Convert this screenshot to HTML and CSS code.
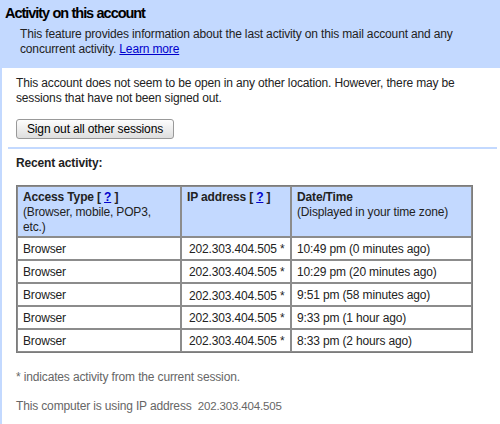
FILE: index.html
```html
<!DOCTYPE html>
<html>
<head>
<meta charset="utf-8">
<link rel="stylesheet" href="styles.css">
</head>
<body>
<div class="page">
  <div class="header">
    <h1 class="title">Activity on this account</h1>
    <p class="intro">This feature provides information about the last activity on this mail account and any concurrent activity. <a href="#" class="link">Learn more</a></p>
  </div>
  <div class="content">
    <p class="status">This account does not seem to be open in any other location. However, there may be sessions that have not been signed out.</p>
    <button class="signout">Sign out all other sessions</button>
    <div class="divider"></div>
    <div class="inner">
      <h2 class="recent">Recent activity:</h2>
      <table class="activity">
        <colgroup><col class="c1"><col class="c2"><col class="c3"></colgroup>
        <thead>
          <tr>
            <th><b>Access Type [ <a href="#" class="link">?</a> ]</b><br><span class="sub">(Browser, mobile, POP3, etc.)</span></th>
            <th><b>IP address [ <a href="#" class="link">?</a> ]</b></th>
            <th><b>Date/Time</b><br><span class="sub">(Displayed in your time zone)</span></th>
          </tr>
        </thead>
        <tbody>
          <tr><td>Browser</td><td class="ip">202.303.404.505 *</td><td>10:49 pm (0 minutes ago)</td></tr>
          <tr><td>Browser</td><td class="ip">202.303.404.505 *</td><td>10:29 pm (20 minutes ago)</td></tr>
          <tr><td>Browser</td><td class="ip low">202.303.404.505 *</td><td>9:51 pm (58 minutes ago)</td></tr>
          <tr><td>Browser</td><td class="ip">202.303.404.505 *</td><td>9:33 pm (1 hour ago)</td></tr>
          <tr><td>Browser</td><td class="ip">202.303.404.505 *</td><td>8:33 pm (2 hours ago)</td></tr>
        </tbody>
      </table>
      <p class="note first">* indicates activity from the current session.</p>
      <p class="note second">This computer is using IP address <span class="ipnote">202.303.404.505</span></p>
    </div>
  </div>
</div>
</body>
</html>
```
FILE: styles.css
```css
html, body {
  margin: 0;
  padding: 0;
}
body {
  width: 500px;
  height: 424px;
  overflow: hidden;
  background: #c3d9ff;
  font-family: Arial, "Liberation Sans", sans-serif;
  font-size: 12px;
  letter-spacing: -0.15px;
  color: #222;
}
.page {
  display: flex;
  flex-direction: column;
  height: 424px;
}
.header {
  padding: 5px 6px 0 5px;
  height: 68px;
  box-sizing: border-box;
  flex: none;
}
.title {
  margin: 0;
  font-size: 14.5px;
  letter-spacing: -1.05px;
  word-spacing: 0.5px;
  font-weight: bold;
  color: #000;
  line-height: 17px;
}
.intro {
  margin: 5px 0 0 15px;
  line-height: 15px;
}
.link {
  color: #0000cc;
  text-decoration: underline;
}
.content {
  flex: 1;
  background: #fff;
  margin-left: 2px;
  padding-top: 8px;
}
.status {
  margin: 0 0 0 14px;
  line-height: 15px;
  width: 470px;
}
.signout {
  display: block;
  margin: 13px 0 0 14px;
  height: 20px;
  width: 158px;
  padding: 0;
  font-family: Arial, "Liberation Sans", sans-serif;
  font-size: 12px;
  letter-spacing: -0.15px;
  color: #000;
  background: linear-gradient(#fdfdfd, #dedede);
  border: 1px solid #999;
  border-radius: 3px;
}
.divider {
  margin: 8px 3px 0 6px;
  height: 2px;
  background: #c3d9ff;
}
.inner {
  padding-left: 14px;
}
.recent {
  margin: 7px 0 0 0;
  font-size: 12px;
  font-weight: bold;
  line-height: 15px;
}
.activity {
  margin-top: 14px;
  border-collapse: separate;
  border-spacing: 0;
  border: 1px solid #7c7c7c;
  width: 457px;
  table-layout: fixed;
}
.c1 { width: 164px; }
.c2 { width: 110px; }
.activity th, .activity td {
  border: 1px solid #8c8c8c;
  text-align: left;
  vertical-align: top;
  line-height: 15px;
  white-space: nowrap;
}
.activity th {
  background: #c3d9ff;
  font-weight: normal;
  padding: 3px 4px 1px 5px;
  white-space: normal;
}
.activity td {
  padding: 4px 4px 2px 5px;
}
.activity td.ip {
  padding-left: 7px;
}
.activity td.low {
  padding-top: 5px;
  padding-bottom: 1px;
}
.note {
  color: #666;
  margin: 0;
  line-height: 15px;
}
.note.first {
  margin-top: 17px;
}
.note.second {
  margin-top: 14px;
}
.ipnote {
  font-size: 11.5px;
  margin-left: 3px;
}
```
